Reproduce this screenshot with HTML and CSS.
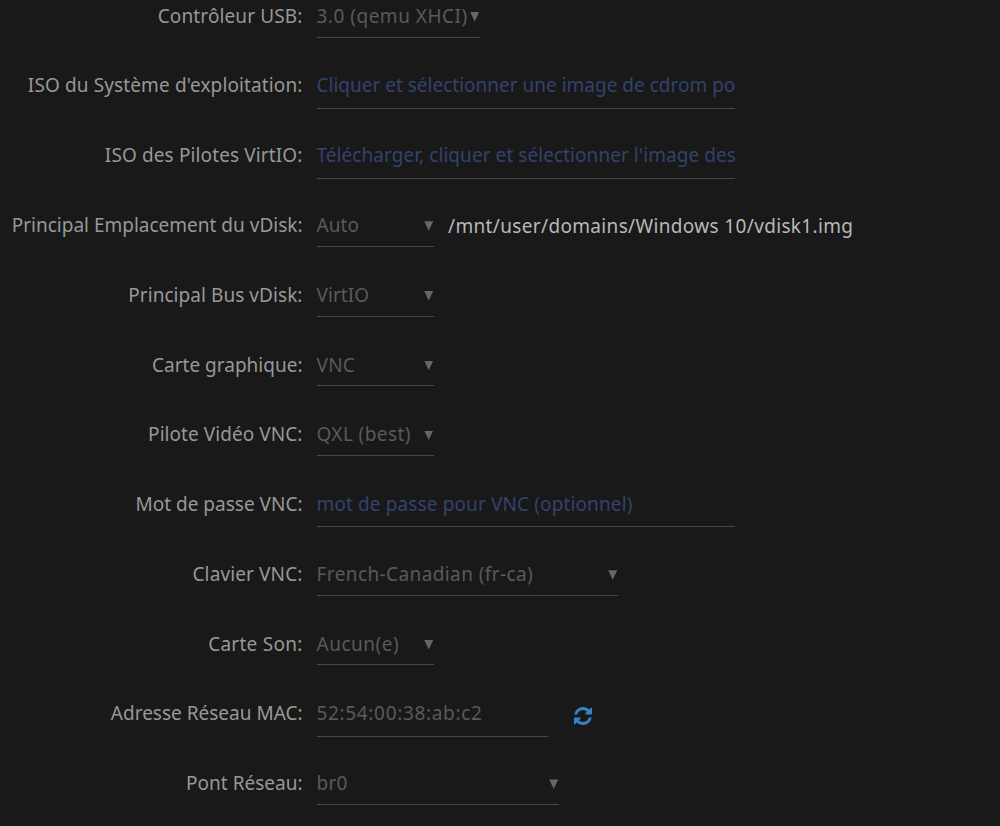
FILE: index.html
```html
<!DOCTYPE html>
<html lang="fr">
<head>
    <meta charset="UTF-8">
    <meta name="viewport" content="width=device-width, initial-scale=1.0">
    <title>Machine virtuelle</title>
    <link rel="stylesheet" href="styles.css">
</head>
<body>
    <div class="vm-form">
        <div class="row">
            <span class="label ls-2">Contrôleur USB:</span>
            <div class="select w-usb"><span class="text ls-5">3.0 (qemu XHCI)</span><i class="arrow"></i></div>
        </div>
        <div class="row">
            <span class="label ls-2">ISO du Système d'exploitation:</span>
            <div class="input placeholder"><span class="text">Cliquer et sélectionner une image de cdrom po</span></div>
        </div>
        <div class="row">
            <span class="label ls-2">ISO des Pilotes VirtIO:</span>
            <div class="input placeholder"><span class="text ls-1">Télécharger, cliquer et sélectionner l'image des</span></div>
        </div>
        <div class="row">
            <span class="label">Principal Emplacement du vDisk:</span>
            <div class="select"><span class="text ls-1">Auto</span><i class="arrow"></i></div>
            <span class="path">/mnt/user/domains/Windows 10/vdisk1.img</span>
        </div>
        <div class="row">
            <span class="label ls-1">Principal Bus vDisk:</span>
            <div class="select"><span class="text ls-1">VirtIO</span><i class="arrow"></i></div>
        </div>
        <div class="row">
            <span class="label">Carte graphique:</span>
            <div class="select"><span class="text ls-3">VNC</span><i class="arrow"></i></div>
        </div>
        <div class="row">
            <span class="label ls-1">Pilote Vidéo VNC:</span>
            <div class="select"><span class="text ls-4">QXL (best)</span><i class="arrow"></i></div>
        </div>
        <div class="row">
            <span class="label">Mot de passe VNC:</span>
            <div class="input placeholder"><span class="text ls-2">mot de passe pour VNC (optionnel)</span></div>
        </div>
        <div class="row">
            <span class="label ls-2">Clavier VNC:</span>
            <div class="select w-keyboard"><span class="text ls-4">French-Canadian (fr-ca)</span><i class="arrow"></i></div>
        </div>
        <div class="row">
            <span class="label ls-3">Carte Son:</span>
            <div class="select"><span class="text ls-5">Aucun(e)</span><i class="arrow"></i></div>
        </div>
        <div class="row">
            <span class="label">Adresse Réseau MAC:</span>
            <div class="input w-mac"><span class="text ls-6">52:54:00:38:ab:c2</span></div>
            <svg class="refresh" viewBox="0 0 1536 1536">
                <path d="M1511 928q0 5-1 7-64 268-268 434.500T764 1536q-146 0-282.500-55T238 1324l-129 129q-19 19-45 19t-45-19-19-45V960q0-26 19-45t45-19h448q26 0 45 19t19 45-19 45l-137 137q71 66 161 102t187 36q134 0 250-65t186-179q11-17 53-117 8-23 30-23h192q13 0 22.500 9.500t9.500 22.500zM1536 128v448q0 26-19 45t-45 19h-448q-26 0-45-19t-19-45 19-45l138-138Q969 256 768 256q-134 0-250 65T332 500q-11 17-53 117-8 23-30 23H50q-13 0-22.500-9.500T18 608v-7q65-268 270-434.500T768 0q146 0 284 55.500T1297 212l130-129q19-19 45-19t45 19 19 45z"/>
            </svg>
        </div>
        <div class="row">
            <span class="label">Pont Réseau:</span>
            <div class="select w-bridge"><span class="text ls-3">br0</span><i class="arrow"></i></div>
        </div>
    </div>
</body>
</html>
```
FILE: styles.css
```css
body {
    margin: 0;
    height: 826px;
    overflow: hidden;
    background-color: #191919;
    font-family: "Noto Sans", "Open Sans", sans-serif;
    font-size: 19px;
    line-height: 32px;
    color: #989898;
    white-space: nowrap;
}
.row {
    display: flex;
    align-items: flex-start;
    height: 69.77px;
}
.label {
    width: 302.5px;
    margin: -0.3px 14px 0 0;
    text-align: right;
    flex-shrink: 0;
}
.select,
.input {
    display: flex;
    align-items: flex-start;
    box-sizing: border-box;
    border-bottom: 1px solid #484848;
    color: #5a5a5a;
    flex-shrink: 0;
}
.select {
    justify-content: space-between;
    width: 117.5px;
    height: 37.6px;
}
.input {
    width: 418.5px;
    height: 39px;
}
.text {
    margin-top: -0.3px;
}
.placeholder {
    color: #32436c;
}
.arrow {
    width: 9px;
    height: 9.5px;
    margin: 12px 0.8px 0 -6px;
    background-color: #666;
    clip-path: polygon(0 0, 100% 0, 50% 100%);
}
.path {
    margin: 1px 0 0 14px;
    letter-spacing: 0.34px;
    color: #b8b8b8;
}
.refresh {
    width: 18px;
    height: 18px;
    margin: 9px 0 0 26px;
    fill: #3584c8;
}
.w-usb {
    width: 163.5px;
}
.w-keyboard {
    width: 301.5px;
}
.w-mac {
    width: 231.5px;
}
.w-bridge {
    width: 242.5px;
}
/* letter spacing steps */
.ls-1 {
    letter-spacing: 0.06px;
}
.ls-2 {
    letter-spacing: 0.12px;
}
.ls-3 {
    letter-spacing: 0.25px;
}
.ls-4 {
    letter-spacing: 0.4px;
}
.ls-5 {
    letter-spacing: 0.5px;
}
.ls-6 {
    letter-spacing: 0.66px;
}
```
